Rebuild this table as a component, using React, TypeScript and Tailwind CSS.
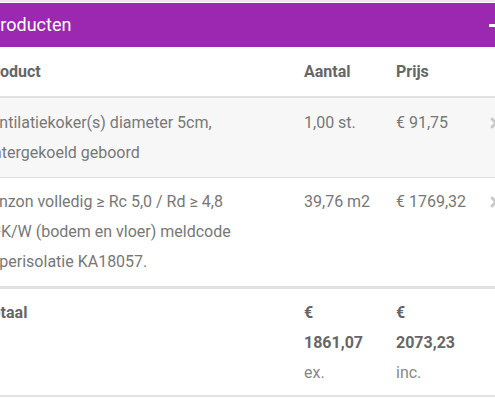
import { FaTimes } from 'react-icons/fa'

type Item = {
  lines: string[]
  amount: string
  price: string
}

const items: Item[] = [
  {
    lines: ['Ventilatiekoker(s) diameter 5cm,', 'watergekoeld geboord'],
    amount: '1,00 st.',
    price: '€ 91,75',
  },
  {
    lines: [
      'Tonzon volledig ≥ Rc 5,0 / Rd ≥ 4,8',
      'm²K/W (bodem en vloer) meldcode',
      'Superisolatie KA18057.',
    ],
    amount: '39,76 m2',
    price: '€ 1769,32',
  },
]

export default function App() {
  return (
    <div className="h-[400px] w-[495px] overflow-hidden bg-white font-['Roboto',sans-serif] text-[16px]">
      <div className="-ml-[29px] w-[554px] border-t-[2px] border-[#f1e4f3] pt-[1px]">
        {/* Kop */}
        <div className="flex h-[44px] items-center justify-between bg-[#9c27b0] pl-[18px] pr-[24px]">
          <h2 className="text-[18px] leading-none text-white">Producten</h2>
          <span className="mt-[1px] h-[3px] w-[12px] bg-white" />
        </div>

        {/* Tabelkop */}
        <div className="flex border-b-2 border-[#e2e2e2] pb-[9px] pl-[13px] pt-[10px] font-bold leading-[30px] text-[#666]">
          <div className="w-[320px]">Product</div>
          <div className="w-[92px]">Aantal</div>
          <div className="w-[92px]">Prijs</div>
          <div className="flex-1" />
        </div>

        {items.map((item, i) => (
          <div
            key={i}
            className={`flex border-b border-[#e0e0e0] py-[9px] pl-[10px] leading-[30px] text-[#777] ${
              i % 2 === 0 ? 'bg-[#f7f7f7] pt-[10px]' : 'bg-white'
            }`}
          >
            <div className="w-[323px] whitespace-nowrap">
              {item.lines.map((line) => (
                <div key={line}>{line}</div>
              ))}
            </div>
            <div className="w-[92px] whitespace-nowrap">{item.amount}</div>
            <div className="w-[92px] whitespace-nowrap">{item.price}</div>
            <div className="flex h-[30px] flex-1 items-center">
              <FaTimes size={16} className="text-[#c8c8c8]" />
            </div>
          </div>
        ))}

        {/* Totaal */}
        <div className="flex border-b-2 border-t-2 border-[#e2e2e2] pb-[7px] pl-[12px] pt-[9px] leading-[30px]">
          <div className="w-[321px] font-bold text-[#666]">Totaal</div>
          <div className="w-[92px]">
            <div className="font-bold text-[#666]">€</div>
            <div className="font-bold text-[#666]">1861,07</div>
            <div className="text-[#888]">ex.</div>
          </div>
          <div className="w-[92px]">
            <div className="font-bold text-[#666]">€</div>
            <div className="font-bold text-[#666]">2073,23</div>
            <div className="text-[#888]">inc.</div>
          </div>
          <div className="flex-1" />
        </div>
      </div>
    </div>
  )
}
